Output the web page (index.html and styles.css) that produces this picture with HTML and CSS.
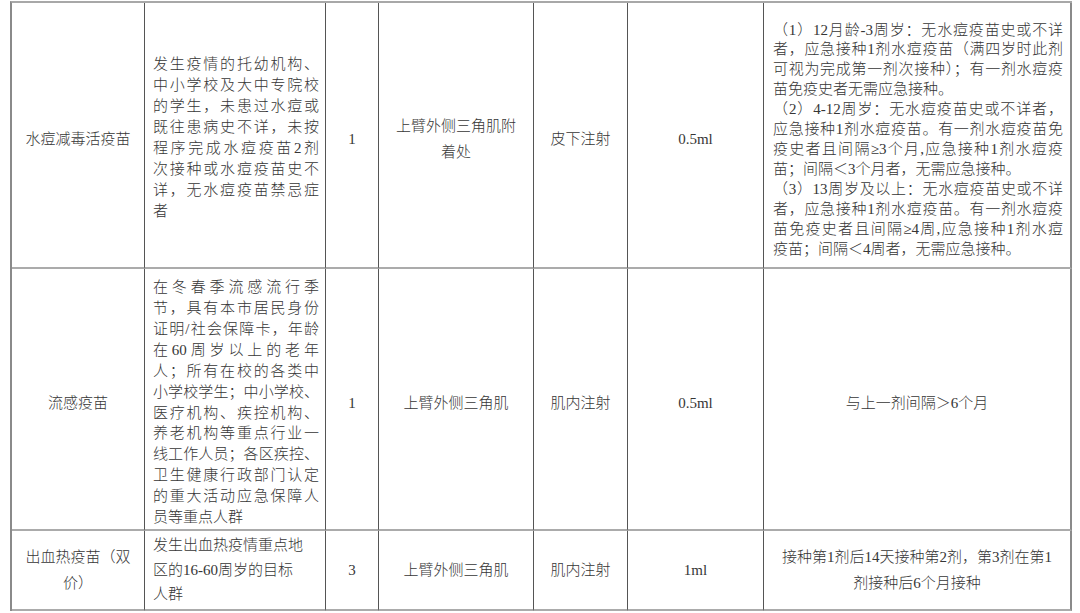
FILE: index.html
```html
<!DOCTYPE html>
<html lang="zh-CN">
<head>
<meta charset="utf-8">
<title>应急接种疫苗表</title>
<link rel="stylesheet" href="styles.css">
</head>
<body>
<table class="vac">
  <colgroup>
    <col class="c1"><col class="c2"><col class="c3"><col class="c4"><col class="c5"><col class="c6"><col class="c7">
  </colgroup>
  <tbody>
    <tr class="r1">
      <td class="ctr">水痘减毒活疫苗</td>
      <td class="just">
        <span class="ln">发生疫情的托幼机构、</span>
        <span class="ln">中小学校及大中专院校</span>
        <span class="ln">的学生，未患过水痘或</span>
        <span class="ln">既往患病史不详，未按</span>
        <span class="ln">程序完成水痘疫苗2剂</span>
        <span class="ln">次接种或水痘疫苗史不</span>
        <span class="ln">详，无水痘疫苗禁忌症</span>
        <span class="ln end">者</span>
      </td>
      <td class="ctr">1</td>
      <td class="ctr tall">上臂外侧三角肌附<br>着处</td>
      <td class="ctr">皮下注射</td>
      <td class="ctr">0.5ml</td>
      <td class="just note">
        <span class="ln">（1）12月龄-3周岁：无水痘疫苗史或不详</span>
        <span class="ln">者，应急接种1剂水痘疫苗（满四岁时此剂</span>
        <span class="ln">可视为完成第一剂次接种）；有一剂水痘疫</span>
        <span class="ln end">苗免疫史者无需应急接种。</span>
        <span class="ln">（2）4-12周岁：无水痘疫苗史或不详者，</span>
        <span class="ln">应急接种1剂水痘疫苗。有一剂水痘疫苗免</span>
        <span class="ln">疫史者且间隔≥3个月,应急接种1剂水痘疫</span>
        <span class="ln end">苗；间隔＜3个月者，无需应急接种。</span>
        <span class="ln">（3）13周岁及以上：无水痘疫苗史或不详</span>
        <span class="ln">者，应急接种1剂水痘疫苗。有一剂水痘疫</span>
        <span class="ln">苗免疫史者且间隔≥4周,应急接种1剂水痘</span>
        <span class="ln end">疫苗；间隔＜4周者，无需应急接种。</span>
      </td>
    </tr>
    <tr class="r2">
      <td class="ctr">流感疫苗</td>
      <td class="just">
        <span class="ln">在冬春季流感流行季</span>
        <span class="ln">节，具有本市居民身份</span>
        <span class="ln">证明/社会保障卡，年龄</span>
        <span class="ln">在60周岁以上的老年</span>
        <span class="ln">人；所有在校的各类中</span>
        <span class="ln">小学校学生；中小学校、</span>
        <span class="ln">医疗机构、疾控机构、</span>
        <span class="ln">养老机构等重点行业一</span>
        <span class="ln">线工作人员；各区疾控、</span>
        <span class="ln">卫生健康行政部门认定</span>
        <span class="ln">的重大活动应急保障人</span>
        <span class="ln end">员等重点人群</span>
      </td>
      <td class="ctr">1</td>
      <td class="ctr">上臂外侧三角肌</td>
      <td class="ctr">肌内注射</td>
      <td class="ctr">0.5ml</td>
      <td class="ctr">与上一剂间隔＞6个月</td>
    </tr>
    <tr class="r3">
      <td class="ctr tall">出血热疫苗（双<br>价）</td>
      <td class="left">发生出血热疫情重点地<br>区的16-60周岁的目标<br>人群</td>
      <td class="ctr">3</td>
      <td class="ctr">上臂外侧三角肌</td>
      <td class="ctr">肌内注射</td>
      <td class="ctr">1ml</td>
      <td class="ctr tall">接种第1剂后14天接种第2剂，第3剂在第1<br>剂接种后6个月接种</td>
    </tr>
  </tbody>
</table>
</body>
</html>
```
FILE: styles.css
```css
html, body {
  margin: 0;
  padding: 0;
  background: #ffffff;
}

body {
  font-family: "Liberation Serif", "Noto Sans CJK SC", serif;
  font-size: 15px;
  font-weight: 300;
  color: #363636;
}

.vac {
  margin: 1px 0 0 10px;
  border-collapse: separate;
  border-spacing: 0;
  table-layout: fixed;
  width: 1062px;
  border-left: 2px solid #8a8a8a;
  border-top: 2px solid #a8a8a8;
}

.c1 { width: 133px; }
.c2 { width: 181px; }
.c3 { width: 53px; }
.c4 { width: 155px; }
.c5 { width: 94px; }
.c6 { width: 136px; }
.c7 { width: 308px; }

.vac td {
  box-sizing: border-box;
  border-right: 1px solid #555555;
  border-bottom: 2px solid #ababab;
  padding: 0 4px;
  vertical-align: middle;
  line-height: 24px;
}

.vac td:last-child {
  border-right: 2px solid #8a8a8a;
}

.vac .r1 td { height: 266px; padding-top: 8px; }
.vac .r2 td { height: 262px; padding-top: 7px; }
.vac .r3 td { height: 80px; }

.vac .r1 td.just { padding-top: 6px; }
.vac .r2 td.just { padding-top: 7px; }
.vac .r1 td.note { padding-top: 10px; }

.ctr {
  text-align: center;
}

.vac td.tall {
  line-height: 26px;
}

.vac td.just {
  padding-left: 8px;
  padding-right: 6px;
  line-height: 20.9px;
}

.vac td.note {
  padding-left: 9px;
  padding-right: 7px;
  line-height: 19.9px;
}

.ln {
  display: block;
  white-space: nowrap;
  text-align: justify;
  text-align-last: justify;
}

.ln.end {
  text-align-last: left;
}

.vac td.left {
  text-align: left;
  padding-left: 8px;
  line-height: 24.5px;
}
```
